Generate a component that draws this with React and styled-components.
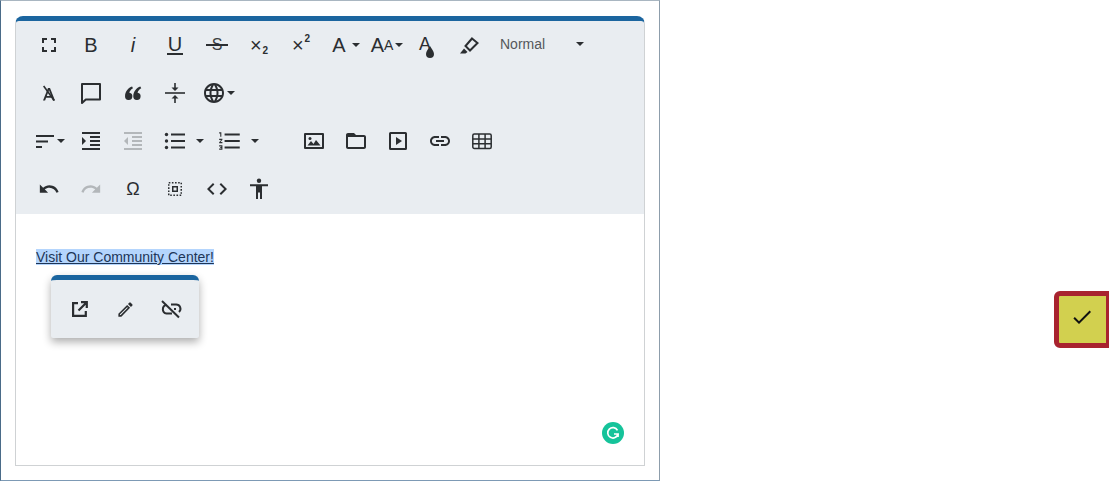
import React from "react";
import styled, { createGlobalStyle } from "styled-components";
import {
  MdFormatIndentIncrease,
  MdFormatIndentDecrease,
  MdFormatListNumbered,
  MdLink,
  MdUndo,
  MdRedo,
  MdCode,
  MdCheck,
  MdLanguage,
  MdFolderOpen,
  MdOutlineEdit,
} from "react-icons/md";

const GlobalStyle = createGlobalStyle`
  html, body {
    margin: 0;
    padding: 0;
    background: #fff;
    font-family: "Liberation Sans", Arial, sans-serif;
  }
`;

const Page = styled.div`
  display: flex;
  justify-content: space-between;
  width: 1109px;
  height: 481px;
  overflow: hidden;
`;

const Frame = styled.div`
  box-sizing: border-box;
  width: 660px;
  height: 481px;
  padding: 15px 14px 0;
  border: 1px solid #8d9dab;
  border-top-color: #a9b6c1;
  border-left-color: #4a6b88;
  border-bottom-color: #7d9ab5;
`;

const Editor = styled.div`
  box-sizing: border-box;
  width: 630px;
  height: 450px;
  display: flex;
  flex-direction: column;
  border: 1px solid #cfd2d4;
  border-top: 5px solid #1b659f;
  border-radius: 8px 8px 0 0;
`;

const Toolbar = styled.div`
  background: #e9edf1;
  padding-left: 12px;
  height: 193px;
  flex: none;
  border-radius: 3px 3px 0 0;
`;

const Row = styled.div`
  display: flex;
  align-items: center;
  height: 48px;
`;

const Btn = styled.div`
  display: flex;
  align-items: center;
  justify-content: center;
  flex: none;
  width: ${(p) => p.$w || 42}px;
  height: 48px;
  color: ${(p) => (p.$off ? "#b3b7ba" : "#2b2e31")};
  font-family: "Liberation Sans", Arial, sans-serif;
  font-size: 20px;
  line-height: 1;
  svg {
    flex: none;
  }
`;

const Caret = styled.span`
  display: inline-block;
  flex: none;
  margin-left: ${(p) => p.$gap || 0}px;
  width: 0;
  height: 0;
  border-left: 4px solid transparent;
  border-right: 4px solid transparent;
  border-top: 4px solid #2b2e31;
`;

const Italic = styled.span`
  font-style: italic;
`;

const Under = styled.span`
  display: inline-block;
  border-bottom: 2px solid #2b2e31;
  padding: 0 1px 1px;
  line-height: 16px;
`;

const Struck = styled.span`
  position: relative;
  display: inline-block;
  padding: 0 6px;
  font-size: 16px;
  color: #3a3d40;
  &::after {
    content: "";
    position: absolute;
    left: 0;
    right: 0;
    top: 7px;
    height: 2px;
    background: #2b2e31;
  }
`;

const Small = styled.span`
  font-size: 10px;
  font-weight: 700;
  line-height: 1;
  position: relative;
  top: ${(p) => p.$v}px;
  margin-left: 1px;
`;

const Mark = styled.span`
  font-size: ${(p) => p.$s || 20}px;
`;

const Dropdown = styled.div`
  display: flex;
  align-items: center;
  justify-content: space-between;
  box-sizing: border-box;
  flex: none;
  width: 90px;
  margin-left: 12px;
  padding-right: 6px;
  color: #55585b;
  font-size: 14px;
  position: relative;
  top: -1px;
`;

const Spacer = styled.div`
  flex: none;
  width: ${(p) => p.$w}px;
`;

const Content = styled.div`
  position: relative;
  flex: 1;
  padding: 35px 20px 0;
  background: #fff;
  font-size: 14px;
  line-height: 17px;
`;

const Selected = styled.span`
  background: #b4d5fd;
  color: #1d3557;
  text-decoration: underline;
`;

const Popup = styled.div`
  position: absolute;
  left: 35px;
  top: 61px;
  box-sizing: border-box;
  width: 148px;
  height: 63px;
  display: flex;
  align-items: center;
  padding: 0 5px;
  background: #e9edf1;
  border-top: 5px solid #1b659f;
  border-radius: 6px 6px 2px 2px;
  box-shadow: 0 4px 9px rgba(0, 0, 0, 0.32);
`;

const PopupBtn = styled.div`
  display: flex;
  align-items: center;
  justify-content: center;
  width: 46px;
  color: #2b2e31;
`;

const Grammarly = styled.div`
  position: absolute;
  right: 20px;
  bottom: 21px;
  width: 22px;
  height: 22px;
  border-radius: 50%;
  background: #15c39a;
  display: flex;
  align-items: center;
  justify-content: center;
`;

const Side = styled.div`
  padding-top: 291px;
`;

const CheckBtn = styled.div`
  box-sizing: border-box;
  width: 55px;
  height: 57px;
  padding-bottom: 5px;
  padding-right: 2px;
  display: flex;
  align-items: center;
  justify-content: center;
  background: #d2d04f;
  border: 5px solid #a8232f;
  border-right-width: 3px;
  border-radius: 6px 0 0 6px;
  color: #111;
`;

const Icon = ({ size = 24, children }) => (
  <svg width={size} height={size} viewBox="0 0 24 24" fill="currentColor" aria-hidden="true">
    {children}
  </svg>
);

const Line = ({ size = 24, width = 2, children }) => (
  <svg width={size} height={size} viewBox="0 0 24 24" fill="none" stroke="currentColor" strokeWidth={width} aria-hidden="true">
    {children}
  </svg>
);

const FullscreenIcon = () => (
  <Line>
    <path d="M6 10V6h4M14 6h4v4M18 14v4h-4M10 18H6v-4" />
  </Line>
);

const ClearIcon = () => (
  <Icon>
    <path d="M11 7h2l5 12.500h-2.100l-1-2.700H9.100l-1 2.700H6zM9.800 15h4.400L12 9.300z" />
    <path d="M6 5.500l1.300-1 10.500 14.500-1.300 1z" />
  </Icon>
);

const CommentIcon = () => (
  <Line>
    <path d="M3 3h18v15.500H6.800L3 22z" strokeLinejoin="round" />
  </Line>
);

const QuoteIcon = () => (
  <Icon size={22}>
    <path d="M11 5C7 6.500 3.500 10 3.300 15.500a4 4 0 1 0 4.700-3.900c.5-1.800 2-3.600 4-4.700z" />
    <path d="M20 5c-4 1.500-7.500 5-7.700 10.500a4 4 0 1 0 4.700-3.900c.5-1.800 2-3.600 4-4.700z" />
  </Icon>
);

const SplitIcon = () => (
  <Icon>
    <path d="M2 11.200h20v1.600H2z" />
    <path d="M11.200 2h1.600v4.500H15.500L12 10 8.500 6.500h2.700zM12 14l3.500 3.500h-2.700V22h-1.600v-4.500H8.500z" />
  </Icon>
);

const AlignIcon = () => (
  <Icon>
    <path d="M3 6h18v2H3zM3 11.500h12v2H3zM3 17h6v2H3z" />
  </Icon>
);

const BulletIcon = () => (
  <Icon>
    <circle cx="3.500" cy="5.500" r="1.700" />
    <circle cx="3.500" cy="12" r="1.700" />
    <circle cx="3.500" cy="18.500" r="1.700" />
    <path d="M8 4.500h14v2H8zM8 11h14v2H8zM8 17.500h14v2H8z" />
  </Icon>
);

const ImageIcon = () => (
  <Icon>
    <path d="M3 4h18a1 1 0 0 1 1 1v14a1 1 0 0 1-1 1H3a1 1 0 0 1-1-1V5a1 1 0 0 1 1-1zm1 2v12h16V6z" />
    <circle cx="8" cy="9.500" r="1.500" />
    <path d="M5.500 16.500l3.500-4.500 2.500 3 2.500-4 4.500 5.500z" />
  </Icon>
);

const VideoIcon = () => (
  <Icon>
    <path d="M4.500 3h15A1.500 1.500 0 0 1 21 4.500v15a1.500 1.500 0 0 1-1.500 1.500h-15A1.500 1.500 0 0 1 3 19.500v-15A1.500 1.500 0 0 1 4.500 3zM5 5v14h14V5z" />
    <path d="M10 8l6 4-6 4z" />
  </Icon>
);

const TableIcon = () => (
  <Line width={1.500}>
    <rect x="2.800" y="5" width="18.400" height="14.500" rx="1.500" />
    <path d="M2.800 10h18.400M2.800 14.800h18.400M8.900 5v14.500M15.100 5v14.500" />
  </Line>
);

const HighlightIcon = () => (
  <Icon>
    <path d="M15 5.500l5.500 4.500-7.500 7.500-4.500-4.500z" fill="none" stroke="currentColor" strokeWidth="2" />
    <path d="M3 20.500l4-5 3.500 3.500-2 1.500z" />
  </Icon>
);

const SelectAllIcon = () => (
  <Line width={1.500}>
    <rect x="5.750" y="5.750" width="12.500" height="12.500" strokeDasharray="1.600 1.530" />
    <rect x="9.750" y="9.750" width="4.500" height="4.500" />
  </Line>
);

const BodyIcon = () => (
  <Icon>
    <circle cx="12" cy="3.800" r="2.200" />
    <path d="M3 7.200h18v2h-6V15v7h-2v-6.500h-2V22H9v-7V9.200H3z" />
  </Icon>
);

const OpenIcon = () => (
  <Line width={2.200}>
    <path d="M11 6.200H6.100v12.700h12.700V14" />
    <path d="M11.500 13.500L19 6M14 5.200h5.800V11" />
  </Line>
);

const UnlinkIcon = () => (
  <Line>
    <path d="M7.500 8A4.300 4.300 0 0 0 7.500 16.500H13" />
    <path d="M12 7.500h5a4.300 4.300 0 0 1 3 7.500" />
    <path d="M15 12h2" />
    <path d="M3 4l17 16.500" />
  </Line>
);

const DropIcon = () => (
  <svg width="10" height="14" viewBox="0 0 10 14" fill="currentColor" aria-hidden="true">
    <path d="M5 1c1.500 3 4 5 4 8a4 4 0 0 1-8 0c0-3 2.500-5 4-8z" />
  </svg>
);

const TextColor = styled.span`
  position: relative;
  top: -1px;
  left: -2px;
  font-size: 18px;
`;

const Drop = styled.span`
  position: absolute;
  left: 6px;
  top: 10px;
  line-height: 0;
`;

export default function App() {
  return (
    <Page>
      <GlobalStyle />
      <Frame>
        <Editor>
          <Toolbar>
            <Row>
              <Btn><FullscreenIcon /></Btn>
              <Btn>B</Btn>
              <Btn><Italic>i</Italic></Btn>
              <Btn><Under>U</Under></Btn>
              <Btn><Struck>S</Struck></Btn>
              <Btn>×<Small $v={6}>2</Small></Btn>
              <Btn>×<Small $v={-6}>2</Small></Btn>
              <Btn $w={48}><Mark>A</Mark><Caret $gap={6} /></Btn>
              <Btn $w={34}><Mark>A</Mark><Mark $s={14}>A</Mark><Caret $gap={2} /></Btn>
              <Btn $w={46}><TextColor>A<Drop><DropIcon /></Drop></TextColor></Btn>
              <Btn $w={38}><HighlightIcon /></Btn>
              <Dropdown>Normal<Caret /></Dropdown>
            </Row>
            <Row>
              <Btn><ClearIcon /></Btn>
              <Btn><CommentIcon /></Btn>
              <Btn><QuoteIcon /></Btn>
              <Btn><SplitIcon /></Btn>
              <Btn $w={44}><MdLanguage size={24} /><Caret $gap={1} /></Btn>
            </Row>
            <Row>
              <Btn><AlignIcon /><Caret /></Btn>
              <Btn><MdFormatIndentIncrease size={24} /></Btn>
              <Btn $off><MdFormatIndentDecrease size={24} /></Btn>
              <Btn><BulletIcon /></Btn>
              <Btn $w={8}><Caret /></Btn>
              <Spacer $w={5} />
              <Btn><MdFormatListNumbered size={26} /></Btn>
              <Btn $w={8}><Caret /></Btn>
              <Spacer $w={34} />
              <Btn><ImageIcon /></Btn>
              <Btn><MdFolderOpen size={24} /></Btn>
              <Btn><VideoIcon /></Btn>
              <Btn><MdLink size={24} /></Btn>
              <Btn><TableIcon /></Btn>
            </Row>
            <Row>
              <Btn><MdUndo size={22} /></Btn>
              <Btn $off><MdRedo size={22} /></Btn>
              <Btn><Mark $s={18}>Ω</Mark></Btn>
              <Btn><SelectAllIcon /></Btn>
              <Btn><MdCode size={24} /></Btn>
              <Btn><BodyIcon /></Btn>
            </Row>
          </Toolbar>
          <Content>
            <Selected>Visit Our Community Center!</Selected>
            <Popup>
              <PopupBtn><OpenIcon /></PopupBtn>
              <PopupBtn><MdOutlineEdit size={19} /></PopupBtn>
              <PopupBtn><UnlinkIcon /></PopupBtn>
            </Popup>
            <Grammarly>
              <svg width="14" height="14" viewBox="0 0 14 14" fill="none" stroke="#fff" strokeWidth="1.7" aria-hidden="true">
                <path d="M11.500 4.300A5.200 5.200 0 1 0 12 8H8" />
                <path d="M12 8v3" />
              </svg>
            </Grammarly>
          </Content>
        </Editor>
      </Frame>
      <Side>
        <CheckBtn><MdCheck size={24} /></CheckBtn>
      </Side>
    </Page>
  );
}
